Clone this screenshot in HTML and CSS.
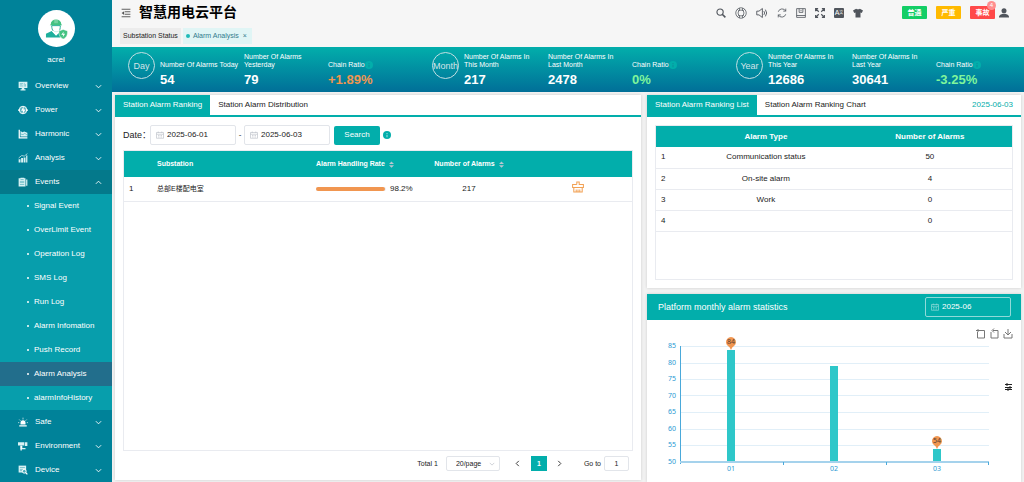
FILE: index.html
```
<!DOCTYPE html>
<html lang="en">
<head>
  <meta charset="UTF-8">
  <meta name="viewport" content="width=device-width, initial-scale=1.0">
  <title>智慧用电云平台</title>
  <link rel="stylesheet" href="styles.css">
</head>
<body>
  <!-- Shared icons -->
  <svg class="sprite" aria-hidden="true">
    <symbol id="chevron" viewBox="0 0 8 8"><path d="M1 2.5l3 3 3-3" fill="none" stroke="currentColor"/></symbol>
    <symbol id="calendar" viewBox="0 0 16 16"><path d="M1 3h14v11.5H1zM1 6.500h14M4.500 1v3M11.500 1v3M4 9h2M7 9h2M10 9h2M4 12h2M7 12h2M10 12h2" fill="none" stroke="currentColor" stroke-width="1.400"/></symbol>
    <symbol id="sort" viewBox="0 0 8 10"><path d="M4 0l4 4H0zM4 10L0 6h8z" fill="#b9c6cf"/></symbol>
    <symbol id="info" viewBox="0 0 16 16"><circle cx="8" cy="8" r="8" fill="#02aeab"/><path d="M8 4v2M8 7.500v5" stroke="currentColor" stroke-width="2"/></symbol>
  </svg>

  <div class="app">
    <aside class="sidebar">
      <div class="profile">
        <div class="avatar">
          <svg viewBox="0 0 48 48">
            <path d="M12 15a11 10 0 0 1 22 0l2 2H10zM20 5h6v8h-6z" fill="#43c281"/>
            <path d="M21 5v8M25 5v8" stroke="#fff"/>
            <path d="M14 18h18c0 13-5 14-9 14s-9-3-9-14z" fill="#fff" stroke="#23ad96" stroke-width="2"/>
            <path d="M14 29L2 35v8h30V30l-9 9z" fill="#1eaf9c"/>
            <path d="M15 30l8 8 8-8v-2l-8 4-7-4z" fill="#fff"/>
            <path d="M38 26l9 3c0 8-1 13-9 17-8-4-9-9-9-17z" fill="#43c281" stroke="#fff"/>
            <path d="M39 30l-5 7h4l-1 5 5-7h-4z" fill="#fff"/>
          </svg>
        </div>
        <span>acrel</span>
      </div>
      <nav class="menu">
        <a class="menu-item" href="#"><svg class="menu-icon" viewBox="0 0 16 16"><path d="M1 1h14v10H1zM6 11h4v3H6zM4 13h8v2H4z" fill="#d8f2f4"/><path d="M3 4h5M3 6h4M3 8h5M10 3v6M12 5v4" stroke="#5eb5c1"/></svg>Overview<svg class="arrow"><use href="#chevron"/></svg></a>
        <a class="menu-item" href="#"><svg class="menu-icon" viewBox="0 0 16 16"><circle cx="8" cy="8" r="6" fill="#5eb5c1" stroke="#fff" stroke-width="1.500"/><path d="M9 2L5 9h3l-1 6 5-8H9z" fill="#fff"/><path d="M0 8h3M13 8h3" stroke="#fff" stroke-width="2"/></svg>Power<svg class="arrow"><use href="#chevron"/></svg></a>
        <a class="menu-item" href="#"><svg class="menu-icon" viewBox="0 0 16 16"><path d="M1 1h2v12h12v2H1z" fill="#fff"/><path d="M4 3l3 2 3-1 5 2v6H4z" fill="#d8f2f4"/><path d="M4 8l4 1 3-2 4 3" fill="none" stroke="#4aabb8"/></svg>Harmonic<svg class="arrow"><use href="#chevron"/></svg></a>
        <a class="menu-item" href="#"><svg class="menu-icon" viewBox="0 0 16 16"><path d="M1 10h3v5H1zM5 8h3v7H5zM9 7h3v8H9zM13 4h2v11h-2z" fill="#d8f2f4"/><path d="M1 8l5-4 4 1 5-4" fill="none" stroke="#fff"/></svg>Analysis<svg class="arrow"><use href="#chevron"/></svg></a>
        <a class="menu-item open" href="#"><svg class="menu-icon" viewBox="0 0 16 16"><path d="M1 2h3V1h6v1h2v13H1zM13 4h2v10h-2z" fill="#d8f2f4"/><path d="M4 4h5M3 7h7M3 9h7M3 12h7" stroke="#4aabb8"/></svg>Events<svg class="arrow"><use href="#chevron"/></svg></a>
        <div class="submenu">
          <a href="#">Signal Event</a>
          <a href="#">OverLimit Event</a>
          <a href="#">Operation Log</a>
          <a href="#">SMS Log</a>
          <a href="#">Run Log</a>
          <a href="#">Alarm Infomation</a>
          <a href="#">Push Record</a>
          <a class="current" href="#">Alarm Analysis</a>
          <a href="#">alarmInfoHistory</a>
        </div>
        <a class="menu-item" href="#"><svg class="menu-icon" viewBox="0 0 16 16"><path d="M4 12V9a4 4 0 0 1 8 0v3zM2 13h12v2H2z" fill="#fff"/><path d="M8 1v3M2 4l2 2M14 4l-2 2M0 9h2M14 9h2" stroke="#fff"/></svg>Safe<svg class="arrow"><use href="#chevron"/></svg></a>
        <a class="menu-item" href="#"><svg class="menu-icon" viewBox="0 0 16 16"><path d="M0 2h10v5H0zM11 2h4v6h-4zM4 8h3v3h5v2H4z" fill="#d8f2f4"/><path d="M5 7v8" stroke="#fff" stroke-width="2"/></svg>Environment<svg class="arrow"><use href="#chevron"/></svg></a>
        <a class="menu-item" href="#"><svg class="menu-icon" viewBox="0 0 16 16"><path d="M1 1h12v11H1z" fill="#d8f2f4"/><path d="M3 4h8M3 7h5M3 9h4" stroke="#4aabb8"/><circle cx="10" cy="10" r="3" fill="#4aabb8" stroke="#fff" stroke-width="1.500"/><path d="M12 12l3 3" stroke="#fff" stroke-width="2"/></svg>Device<svg class="arrow"><use href="#chevron"/></svg></a>
      </nav>
    </aside>

    <div class="page">
      <header class="topbar">
        <button class="icon-btn" aria-label="Toggle menu"><svg viewBox="0 0 16 16"><path d="M1 2h14M6 6h9M6 10h9M1 14h14" stroke="#555" stroke-width="1.500"/><path d="M1 8l4-3v6z" fill="#555"/></svg></button>
        <h1>智慧用电云平台</h1>
        <div class="tools">
          <button class="icon-btn" aria-label="Search"><svg viewBox="0 0 16 16"><circle cx="6.500" cy="6.500" r="5" fill="none" stroke="#50555c" stroke-width="1.800"/><path d="M10 10l5 5" stroke="#50555c" stroke-width="2.500"/></svg></button>
          <button class="icon-btn large" aria-label="Help"><svg viewBox="0 0 16 16"><g fill="none" stroke="#50555c"><circle cx="8" cy="8" r="7"/><circle cx="8" cy="8" r="4"/><path d="M3 3l2 2M13 3l-2 2M3 13l2-2M13 13l-2-2M6 1.500v3M10 1.500v3M6 11.500v3M10 11.500v3"/></g></svg></button>
          <button class="icon-btn large" aria-label="Sound"><svg viewBox="0 0 16 16"><path d="M1 5.500h3L8.500 2v12L4 10.500H1zM10.500 5.500q2 2.500 0 5M12.500 3.500q3.500 4.500 0 9" fill="none" stroke="#50555c" stroke-width="1.200"/></svg></button>
          <button class="icon-btn" aria-label="Refresh"><svg viewBox="0 0 16 16"><path d="M2 6a6.500 6.500 0 0 1 12-1M14 10a6.500 6.500 0 0 1-12 1M14 1v4h-4M2 15v-4h4" fill="none" stroke="#50555c" stroke-width="1.300"/></svg></button>
          <button class="icon-btn" aria-label="Docs"><svg viewBox="0 0 16 16"><path d="M1 1h14v14H1zM1 12h14M5 1v6h6V1M8 3v2" fill="none" stroke="#50555c" stroke-width="1.300"/></svg></button>
          <button class="icon-btn" aria-label="Full screen"><svg viewBox="0 0 16 16"><path d="M1 5V1h4M11 1h4v4M15 11v4h-4M5 15H1v-4M1 1l5 5M15 1l-5 5M15 15l-5-5M1 15l5-5" fill="none" stroke="#50555c" stroke-width="1.900"/></svg></button>
          <button class="icon-btn lang" aria-label="Language">A<sup>文</sup></button>
          <button class="icon-btn" aria-label="Theme"><svg viewBox="0 0 16 16"><path d="M5 1q3 2 6 0l5 3-2 4-2-1v8H4V7L2 8 0 4z" fill="#50555c"/></svg></button>
        </div>
        <div class="levels">
          <button class="level green">普通</button>
          <button class="level amber">严重</button>
          <button class="level red">事故<span class="badge">4</span></button>
        </div>
        <button class="icon-btn user" aria-label="Account"><svg viewBox="0 0 16 16"><circle cx="8" cy="4.500" r="4" fill="#50555c"/><path d="M0 15v-2q1-3 6-4h4q5 1 6 4v2z" fill="#50555c"/></svg></button>
      </header>
      <div class="page-tabs">
        <a href="#">Substation Status</a>
        <a class="active" href="#"><i></i>Alarm Analysis<span>×</span></a>
      </div>

      <section class="stats">
        <div class="stat">
          <div class="circle">Day</div>
          <dl><dt>Number Of Alarms Today</dt><dd>54</dd></dl>
          <dl><dt>Number Of Alarms<br>Yesterday</dt><dd>79</dd></dl>
          <dl><dt>Chain Ratio<svg><use href="#info"/></svg></dt><dd class="up">+1.89%</dd></dl>
        </div>
        <div class="stat">
          <div class="circle">Month</div>
          <dl><dt>Number Of Alarms In<br>This Month</dt><dd>217</dd></dl>
          <dl><dt>Number Of Alarms In<br>Last Month</dt><dd>2478</dd></dl>
          <dl><dt>Chain Ratio<svg><use href="#info"/></svg></dt><dd class="down">0%</dd></dl>
        </div>
        <div class="stat">
          <div class="circle">Year</div>
          <dl><dt>Number Of Alarms In<br>This Year</dt><dd>12686</dd></dl>
          <dl><dt>Number Of Alarms In<br>Last Year</dt><dd>30641</dd></dl>
          <dl><dt>Chain Ratio<svg><use href="#info"/></svg></dt><dd class="down">-3.25%</dd></dl>
        </div>
      </section>

      <main class="content">
        <section class="panel ranking">
          <div class="tabs">
            <button class="active">Station Alarm Ranking</button>
            <button>Station Alarm Distribution</button>
          </div>
          <form class="filters">
            <label for="from">Date：</label>
            <div class="date"><svg><use href="#calendar"/></svg><input id="from" type="text" value="2025-06-01"></div>
            <span>-</span>
            <div class="date"><svg><use href="#calendar"/></svg><input type="text" value="2025-06-03" aria-label="End date"></div>
            <button class="search" type="button">Search</button>
            <svg class="hint"><use href="#info"/></svg>
          </form>
          <div class="table-box">
            <table class="stations">
              <colgroup><col class="c-index"><col class="c-name"><col class="c-rate"><col class="c-count"><col></colgroup>
              <thead>
                <tr><th></th><th>Substation</th><th>Alarm Handling Rate <svg><use href="#sort"/></svg></th><th class="center">Number of Alarms <svg><use href="#sort"/></svg></th><th></th></tr>
              </thead>
              <tbody>
                <tr>
                  <td>1</td>
                  <td class="name">总部E楼配电室</td>
                  <td><div class="rate"><div class="bar"><div class="fill" style="width: 98.2%"></div></div>98.2%</div></td>
                  <td class="center">217</td>
                  <td class="center"><button class="clear" aria-label="Clear alarms"><svg viewBox="0 0 20 20"><path d="M8 6V1.500h4V6h7v5H1V6h7M3 11v7.500h14V11M7 14v4M10 14v4M13 14v4" fill="none" stroke="#f2a154" stroke-width="1.700"/></svg></button></td>
                </tr>
              </tbody>
            </table>
          </div>
          <div class="pager">
            <span>Total 1</span>
            <div class="size">
              <select aria-label="Page size"><option>20/page</option></select>
              <svg><use href="#chevron"/></svg>
            </div>
            <button class="step prev" aria-label="Previous"><svg><use href="#chevron"/></svg></button>
            <button class="num">1</button>
            <button class="step next" aria-label="Next"><svg><use href="#chevron"/></svg></button>
            <label for="goto">Go to</label>
            <input id="goto" type="text" value="1">
          </div>
        </section>

        <div class="side">
          <section class="panel types">
            <div class="tabs">
              <button class="active">Station Alarm Ranking List</button>
              <button>Station Alarm Ranking Chart</button>
              <span class="today">2025-06-03</span>
            </div>
            <div class="table-box">
              <table>
                <colgroup><col class="c-index"><col class="c-type"><col></colgroup>
                <thead><tr><th></th><th class="center">Alarm Type</th><th class="center">Number of Alarms</th></tr></thead>
                <tbody>
                  <tr><td>1</td><td class="center">Communication status</td><td class="center">50</td></tr>
                  <tr><td>2</td><td class="center">On-site alarm</td><td class="center">4</td></tr>
                  <tr><td>3</td><td class="center">Work</td><td class="center">0</td></tr>
                  <tr><td>4</td><td class="center"></td><td class="center">0</td></tr>
                </tbody>
              </table>
            </div>
          </section>

          <section class="panel monthly">
            <div class="panel-head">
              <h2>Platform monthly alarm statistics</h2>
              <div class="date"><svg><use href="#calendar"/></svg><input type="text" value="2025-06" aria-label="Month"></div>
            </div>
            <svg class="chart" viewBox="0 0 374 162">
              <!-- toolbox -->
              <g class="toolbox">
                <path d="M331 9v3M329 10.500h8.500v7.500h-7v-6"/>
                <path d="M346 10.500h5v7.500h-7v-6M347 8.500l-2 2 2 2"/>
                <path d="M361 9v6M358 12l3 3 3-3M357 14v4h8v-4"/>
              </g>
              <path class="grid" d="M33 26.500h309M33 43.500h309M33 59.500h309M33 75.500h309M33 92.500h309M33 109.500h309M33 125.500h309"/>
              <g class="bars">
                <path d="M80 30h8v112h-8zM183 46h8v96h-8zM286 129h8v13h-8z"/>
              </g>
              <path class="axis-y" d="M33.500 26v118"/>
              <path class="axis-x" d="M33 142h309"/>
              <path class="ticks" d="M136.500 142v3M239.500 142v3M341.500 142v3"/>
              <g class="labels-y">
                <text x="29" y="28">85</text><text x="29" y="45">80</text><text x="29" y="61">75</text><text x="29" y="78">70</text>
                <text x="29" y="94">65</text><text x="29" y="111">60</text><text x="29" y="127">55</text><text x="29" y="144">50</text>
              </g>
              <g class="labels-x"><text x="84" y="151">01</text><text x="187" y="151">02</text><text x="290" y="151">03</text></g>
              <g class="pins">
                <path d="M84 30q-1-3-3-4a5 5 0 1 1 6 0q-2 1-3 4z"/>
                <path d="M290 129q-1-3-3-4a5 5 0 1 1 6 0q-2 1-3 4z"/>
                <text x="84" y="24">84</text><text x="290" y="123">54</text>
              </g>
              <path class="settings" d="M358 64.500h7M358 67.500h7M358 69.500h7M360 63v3M363 66v3M361 68v3"/>
            </svg>
          </section>
        </div>
      </main>
    </div>
  </div>
</body>
</html>
```
FILE: styles.css
```
* {
  box-sizing: border-box;
}
body {
  margin: 0;
  font-family: "Liberation Sans", "Noto Sans CJK SC", Arial, sans-serif;
  font-size: 8px;
  line-height: 10px;
  color: #222;
}
button, input, select {
  font: inherit;
  color: inherit;
  margin: 0;
  padding: 0;
  border: 0;
  background: none;
}
button {
  cursor: pointer;
}
a {
  color: inherit;
  text-decoration: none;
}
.sprite {
  display: none;
}
.app {
  display: flex;
  height: 100vh;
  overflow: hidden;
}

/* Sidebar */
.sidebar {
  flex: 0 0 112px;
  background: #008299;
  color: #fff;
  overflow: hidden;
}
.profile {
  display: flex;
  flex-direction: column;
  align-items: center;
  gap: 8px;
  height: 74px;
  padding-top: 10px;
}
.avatar {
  display: flex;
  align-items: center;
  justify-content: center;
  width: 37px;
  height: 37px;
  border-radius: 50%;
  background: #fff;
}
.avatar svg {
  width: 23px;
  height: 23px;
}
.menu-item {
  display: flex;
  align-items: center;
  gap: 7px;
  height: 24px;
  padding: 0 10px 0 18px;
}
.menu-icon {
  width: 10px;
  height: 10px;
}
.arrow {
  width: 7px;
  height: 7px;
  margin-left: auto;
}
.open {
  background: #04798b;
}
.open .arrow {
  transform: rotate(180deg);
}
.submenu {
  background: #079eac;
}
.submenu a {
  display: flex;
  align-items: center;
  gap: 5px;
  height: 24px;
  padding-left: 27px;
}
.submenu a::before {
  content: "";
  width: 2px;
  height: 2px;
  border-radius: 50%;
  background: #fff;
}
.submenu .current {
  background: #226e8c;
}

/* Header */
.page {
  display: flex;
  flex-direction: column;
  flex: 1;
  min-width: 0;
  background: #f2f2f2;
}
.topbar {
  display: flex;
  align-items: center;
  height: 25px;
  padding: 0 15px 0 9px;
  background: #f6f6f6;
}
.topbar h1 {
  margin: 0 0 2px 8px;
  font-size: 14px;
  line-height: 22px;
  color: #000;
}
.icon-btn {
  display: flex;
  align-items: center;
  justify-content: center;
  width: 10px;
  height: 10px;
}
.icon-btn svg {
  width: 100%;
  height: 100%;
}
.icon-btn.large {
  width: 12px;
  height: 12px;
}
.icon-btn.lang {
  background: #50555c;
  color: #fff;
  border-radius: 1px;
  font-size: 7px;
  line-height: 9px;
}
.lang sup {
  font-size: 4px;
  line-height: 4px;
}
.tools {
  display: flex;
  align-items: center;
  gap: 9px;
  margin-left: auto;
}
.levels {
  display: flex;
  gap: 9px;
  margin: 0 4px 0 39px;
}
.level {
  position: relative;
  width: 25px;
  height: 13px;
  border-radius: 1px;
  color: #fff;
  font-size: 7px;
  font-weight: bold;
}
.green {
  background: #13ce66;
}
.amber {
  background: #ffba00;
}
.red {
  background: #ff4949;
}
.badge {
  position: absolute;
  top: -5px;
  right: -1px;
  width: 9px;
  height: 9px;
  border-radius: 50%;
  background: #ff8e8e;
  font-size: 6px;
  font-weight: normal;
  line-height: 9px;
}
.page-tabs {
  display: flex;
  gap: 2px;
  height: 22px;
  padding: 3px 8px;
  background: #f6f6f6;
}
.page-tabs a {
  display: flex;
  align-items: center;
  height: 16px;
  padding: 0 3px;
  background: #ececec;
  font-size: 7px;
}
.page-tabs .active {
  background: #e0f5f5;
  color: #327a8d;
}
.page-tabs i {
  width: 4px;
  height: 4px;
  margin-right: 3px;
  border-radius: 50%;
  background: #1fbab8;
}
.page-tabs span {
  margin: 0 2px 0 4px;
}

/* Day, month and year totals */
.stats {
  display: grid;
  grid-template-columns: repeat(3, 1fr);
  flex: 0 0 45px;
  background: linear-gradient(#02aeab, #016f98);
  color: #fff;
}
.stat {
  display: grid;
  grid-template-columns: 27px repeat(3, 84px);
  padding: 5px 0 0 16px;
}
.circle {
  width: 27px;
  height: 27px;
  border: 1px solid #c3dfe3;
  border-radius: 50%;
  display: flex;
  align-items: center;
  justify-content: center;
  font-size: 9px;
  color: #d5e5e8;
}
.stat dl {
  margin: 0;
  padding-left: 5px;
  white-space: nowrap;
}
.stat dt {
  display: flex;
  align-items: flex-end;
  height: 17px;
  font-size: 7px;
  line-height: 8px;
}
.stat dt svg {
  width: 8px;
  height: 8px;
  color: #0b8f9a;
}
.stat dd {
  margin: 3px 0 0;
  font-size: 13px;
  font-weight: bold;
  line-height: 16px;
}
.stat .up {
  color: #f19650;
}
.stat .down {
  color: #7ff59b;
}

/* Panels */
.content {
  display: grid;
  grid-template-columns: 526fr 374fr;
  grid-template-rows: minmax(0, 1fr);
  gap: 6px;
  flex: 1;
  min-height: 0;
  padding: 3px 3px 0;
}
.panel {
  background: #fff;
  box-shadow: 0 0 3px rgba(0, 0, 0, 0.15);
}
.tabs {
  display: flex;
  flex: 0 0 22px;
  height: 22px;
  border-bottom: 2px solid #02aeab;
}
.tabs button {
  padding: 0 8px;
}
.tabs .active {
  background: #02aeab;
  color: #fff;
}
.today {
  margin: 0 8px 0 auto;
  line-height: 20px;
  color: #02aeab;
}
.table-box {
  border: 1px solid #e9ebf0;
}
table {
  width: 100%;
  border-collapse: collapse;
  table-layout: fixed;
}
th {
  padding: 0 5px;
  background: #02aeab;
  color: #fff;
  text-align: left;
  white-space: nowrap;
}
td {
  padding: 0 5px;
  border-bottom: 1px solid #e9ebf0;
}
.center {
  text-align: center;
}
.ranking {
  display: flex;
  flex-direction: column;
  margin-bottom: 2px;
}
.filters {
  display: flex;
  align-items: center;
  padding: 8px 8px 5px;
}
.filters label {
  width: 27px;
  font-size: 9px;
  white-space: nowrap;
}
.filters span {
  width: 8px;
  text-align: center;
}
.date {
  display: flex;
  align-items: center;
  gap: 3px;
  width: 86px;
  height: 20px;
  padding: 0 5px;
  border: 1px solid #e2e5ea;
  border-radius: 2px;
}
.date svg {
  flex: 0 0 8px;
  height: 8px;
  color: #c0c4cc;
}
.date input {
  width: 100%;
  min-width: 0;
}
.search {
  width: 46px;
  height: 19px;
  margin: 0 3px 0 4px;
  border-radius: 2px;
  background: #02aeab;
  color: #fff;
}
.hint {
  width: 8px;
  height: 8px;
  color: #9fe0df;
}
.ranking .table-box {
  flex: 1;
  margin: 0 8px;
}
.c-index {
  width: 28px;
}
.c-name {
  width: 159px;
}
.c-rate {
  width: 104px;
}
.c-count {
  width: 108px;
}
.stations th {
  height: 26px;
  font-size: 7px;
}
.stations td {
  height: 24px;
}
.stations .name {
  font-size: 7px;
}
th svg {
  width: 5px;
  height: 7px;
  margin-left: 2px;
  vertical-align: middle;
}
.rate {
  display: flex;
  align-items: center;
  gap: 4px;
}
.bar {
  flex: 0 0 70px;
  height: 4px;
  border-radius: 2px;
  background: #ebeef5;
}
.fill {
  height: 4px;
  border-radius: 2px;
  background: #f19650;
}
.clear svg {
  display: block;
  width: 12px;
  height: 12px;
}
.pager {
  display: flex;
  align-items: center;
  height: 29px;
  padding: 0 12px 4px;
  font-size: 7px;
}
.pager span {
  margin: 0 8px 0 auto;
}
.size {
  display: flex;
  align-items: center;
  width: 54px;
  height: 15px;
  padding: 0 4px 0 9px;
  border: 1px solid #e2e5ea;
  border-radius: 2px;
}
.size select {
  flex: 1;
  appearance: none;
}
.size svg {
  width: 6px;
  height: 6px;
  color: #c0c4cc;
}
.step {
  display: flex;
  align-items: center;
  justify-content: center;
  width: 16px;
  height: 16px;
}
.step svg {
  width: 7px;
  height: 7px;
}
.prev {
  margin: 0 5px 0 10px;
}
.next {
  margin: 0 16px 0 5px;
}
.prev svg {
  transform: rotate(90deg);
}
.next svg {
  transform: rotate(-90deg);
}
.num {
  width: 16px;
  height: 15px;
  background: #02aeab;
  color: #fff;
  font-weight: bold;
}
.pager input {
  width: 25px;
  height: 15px;
  margin-left: 3px;
  border: 1px solid #e2e5ea;
  border-radius: 2px;
  text-align: center;
}

/* Right column */
.side {
  display: flex;
  flex-direction: column;
  gap: 6px;
  min-width: 0;
}
.types {
  flex: 0 0 193px;
  display: flex;
  flex-direction: column;
}
.types .table-box {
  flex: 1;
  margin: 8px;
}
.types th {
  height: 21px;
}
.types td {
  height: 21px;
}
.c-type {
  width: 46%;
}
.panel-head {
  display: flex;
  align-items: center;
  justify-content: space-between;
  height: 26px;
  padding: 0 10px 0 11px;
  background: #02aeab;
  color: #fff;
}
.panel-head h2 {
  margin: 0;
  font-size: 9px;
  font-weight: normal;
}
.panel-head .date {
  border-color: #8fdad9;
}
.panel-head .date svg {
  color: #8fdad9;
}
.monthly {
  flex: 1;
}
.chart {
  display: block;
  width: 100%;
  font-family: "Noto Sans", sans-serif;
  font-size: 7px;
}
.toolbox path {
  fill: none;
  stroke: #777;
}
.grid {
  stroke: #e1eff8;
}
.bars {
  fill: #2ec7c9;
}
.axis-y {
  stroke: #4aa9da;
}
.axis-x {
  stroke: #a5d2ec;
  stroke-width: 2;
}
.ticks {
  stroke: #4aa9da;
}
.labels-y, .labels-x {
  fill: #2a9ad3;
}
.labels-y {
  text-anchor: end;
}
.labels-x, .pins {
  text-anchor: middle;
}
.pins path {
  fill: #f19650;
}
.pins text {
  fill: #5a4030;
}
.settings {
  stroke: #222;
}
```
